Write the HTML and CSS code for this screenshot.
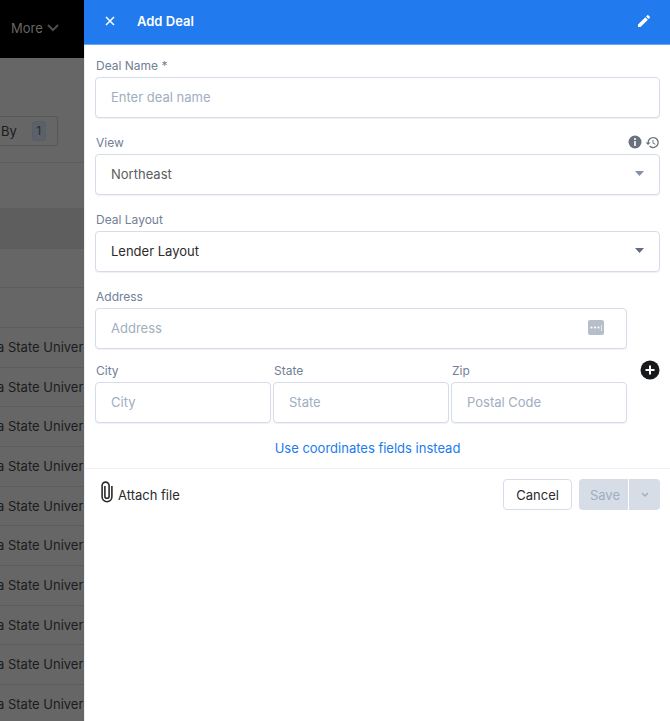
FILE: index.html
```html
<!DOCTYPE html>
<html lang="en">
<head>
<meta charset="utf-8">
<meta name="viewport" content="width=device-width, initial-scale=1">
<title>Add Deal</title>
<link rel="stylesheet" href="styles.css">
</head>
<body>
<div class="backdrop" aria-hidden="true">
  <div class="topbar">
    <span>More</span>
    <svg width="12" height="8" viewBox="0 0 12 8"><path d="M1 1l5 5 5-5" fill="none" stroke="currentColor" stroke-width="2"/></svg>
  </div>
  <div class="toolbar">
    <div class="filter"><span>By</span><span class="count">1</span></div>
  </div>
  <table class="rows">
    <thead><tr><th></th></tr></thead>
    <tbody>
      <tr><td></td></tr>
      <tr><td></td></tr>
      <tr><td>a State Univer</td></tr>
      <tr><td>a State Univer</td></tr>
      <tr><td>a State Univer</td></tr>
      <tr><td>a State Univer</td></tr>
      <tr><td>a State Univer</td></tr>
      <tr><td>a State Univer</td></tr>
      <tr><td>a State Univer</td></tr>
      <tr><td>a State Univer</td></tr>
      <tr><td>a State Univer</td></tr>
      <tr><td>a State Univer</td></tr>
    </tbody>
  </table>
</div>

<main class="drawer">
  <header class="drawer-header">
    <button class="icon-button" type="button" aria-label="Close">
      <svg width="10" height="10" viewBox="0 0 10 10"><path d="M1 1l8 8M9 1l-8 8" stroke="currentColor" stroke-width="1.5" fill="none"/></svg>
    </button>
    <h1>Add Deal</h1>
    <button class="icon-button" type="button" aria-label="Edit layout">
      <svg width="16" height="16" viewBox="0 0 24 24"><path fill="currentColor" d="M3 17.25V21h3.75L17.81 9.94l-3.75-3.75L3 17.25zM20.71 7.04a1 1 0 0 0 0-1.41l-2.34-2.34a1 1 0 0 0-1.41 0l-1.83 1.83 3.75 3.75 1.83-1.83z"/></svg>
    </button>
  </header>

  <form>
    <div class="fields">
      <div class="field">
        <label for="name">Deal Name *</label>
        <input id="name" type="text" placeholder="Enter deal name">
      </div>
      <div class="field">
        <div class="label-row">
          <label for="view">View</label>
          <span class="hints">
            <svg width="14" height="14" viewBox="0 0 14 14"><circle cx="7" cy="7" r="6.5" fill="currentColor"/><path d="M7 3v2M7 6v5" stroke="#fff" stroke-width="1.6"/></svg>
            <svg width="15" height="15" viewBox="0 0 24 24"><path fill="currentColor" d="M13 3a9 9 0 0 0-9 9H1l3.89 3.89.07.14L9 12H6a7 7 0 1 1 7 7 6.9 6.9 0 0 1-4.94-2.06l-1.42 1.42A9 9 0 1 0 13 3zm-1 5v5l4.28 2.54.72-1.21-3.5-2.08V8H12z"/></svg>
          </span>
        </div>
        <div class="select muted">
          <select id="view" disabled><option>Northeast</option></select>
          <svg width="9" height="5" viewBox="0 0 9 5"><path d="M0 0h9L4.5 5z" fill="currentColor"/></svg>
        </div>
      </div>
      <div class="field">
        <label for="layout">Deal Layout</label>
        <div class="select">
          <select id="layout"><option>Lender Layout</option></select>
          <svg width="9" height="5" viewBox="0 0 9 5"><path d="M0 0h9L4.5 5z" fill="currentColor"/></svg>
        </div>
      </div>
      <div class="location">
        <div class="location-fields">
          <div class="field">
            <label for="address">Address</label>
            <div class="with-badge">
              <input id="address" type="text" placeholder="Address">
              <svg width="16" height="15" viewBox="0 0 16 15"><rect width="16" height="15" rx="2" fill="#b6beca"/><circle cx="3.5" cy="7.5" r="1.1" fill="#fff"/><circle cx="7" cy="7.5" r="1.1" fill="#fff"/><circle cx="10.5" cy="7.5" r="1.1" fill="#fff"/><path d="M13.5 5v6" stroke="#e4e8ed"/></svg>
            </div>
          </div>
          <div class="place">
            <div class="field">
              <label for="city">City</label>
              <input id="city" type="text" placeholder="City">
            </div>
            <div class="field">
              <label for="state">State</label>
              <input id="state" type="text" placeholder="State">
            </div>
            <div class="field">
              <label for="zip">Zip</label>
              <input id="zip" type="text" placeholder="Postal Code">
            </div>
          </div>
        </div>
        <button class="add" type="button" aria-label="Add address">
          <svg width="20" height="20" viewBox="0 0 20 20"><circle cx="10" cy="10" r="9.5" fill="#18191b"/><path d="M10 5.5v9M5.5 10h9" stroke="#fff" stroke-width="2"/></svg>
        </button>
      </div>
      <a class="coordinates" href="#">Use coordinates fields instead</a>
    </div>

    <footer class="actions">
      <button class="attach" type="button">
        <svg width="12" height="22" viewBox="0 0 12 22"><path d="M10.9 5v10.8a4.9 4.9 0 0 1-9.8 0V4.6a3.5 3.5 0 0 1 7 0v10.6a2.1 2.1 0 0 1-4.2 0V5" fill="none" stroke="currentColor" stroke-width="1.6"/></svg>
        <span>Attach file</span>
      </button>
      <button class="cancel" type="button">Cancel</button>
      <div class="split">
        <button class="save" type="submit" disabled>Save</button>
        <button class="more" type="button" disabled aria-label="More save options">
          <svg width="8" height="6" viewBox="0 0 8 6"><path d="M1 1l3 3 3-3" fill="none" stroke="currentColor" stroke-width="1.4"/></svg>
        </button>
      </div>
    </footer>
  </form>
</main>
</body>
</html>
```
FILE: styles.css
```css
* {
  box-sizing: border-box;
}

body {
  margin: 0;
  background: #666;
  color: #2b2b2b;
  font: 13px/18px Inter, "Open Sans", sans-serif;
}

button,
input,
select {
  margin: 0;
  font: inherit;
  color: inherit;
}

button {
  padding: 0;
  border: 0;
  background: none;
}

svg {
  display: block;
  flex: none;
}

/* Dimmed page behind the drawer */
.backdrop {
  position: fixed;
  inset: 0;
  overflow: hidden;
  background: #666;
  color: #1c1c1e;
}

.topbar {
  display: flex;
  align-items: center;
  gap: 4px;
  height: 58px;
  padding: 0 0 2px 11px;
  background: #000;
  color: #666;
}

.topbar svg {
  color: #4a4d52;
}

.toolbar {
  display: flex;
  align-items: flex-start;
  height: 105px;
  padding-top: 58px;
  border-bottom: 1px solid #5b5f64;
}

.filter {
  display: flex;
  align-items: center;
  gap: 15px;
  height: 30px;
  padding: 0 11px 0 1px;
  border: 1px solid #54575b;
  border-left: 0;
  border-radius: 0 3px 3px 0;
}

.count {
  width: 14px;
  border: 1px solid #53606b;
  border-radius: 3px;
  background: #5b6166;
  color: #1c2c3c;
  font-size: 12px;
  text-align: center;
}

.rows {
  width: 100%;
  margin-top: 45px;
  border-collapse: collapse;
}

.rows th {
  background: #5e5e5e;
}

.rows th,
.rows td {
  height: 40px;
  padding: 0;
  border-bottom: 1px solid #5c5c5c;
  text-indent: -3px;
  white-space: nowrap;
}

.rows tr:nth-child(3n + 1) td {
  height: 39px;
}

/* Drawer */
.drawer {
  position: relative;
  min-height: 100vh;
  margin-left: 84px;
  border-left: 1px solid #eee;
  background: #fff;
}

.drawer-header {
  display: flex;
  align-items: center;
  height: 45px;
  margin-left: -1px;
  padding: 0 18px 3px;
  border-bottom: 1px solid #6ba7f3;
  background: #217bee;
  color: #fff;
}

.drawer-header h1 {
  flex: 1;
  margin: 0 0 0 19px;
  font-size: 13px;
  font-weight: 600;
}

.icon-button {
  display: grid;
  place-items: center;
  width: 16px;
  height: 16px;
}

.fields {
  display: flex;
  flex-direction: column;
  gap: 16px;
  padding: 12px 10px 11px;
}

.field label {
  display: block;
  height: 20px;
  padding: 0 1px;
  color: #718096;
  font-size: 12px;
}

.label-row {
  display: flex;
  justify-content: space-between;
}

.hints {
  display: flex;
  align-items: center;
  gap: 3px;
  height: 16px;
  color: #697180;
}

input,
select {
  display: block;
  width: 100%;
  height: 41px;
  padding: 0 15px 2px;
  border: 1px solid #d6dce8;
  border-radius: 4px;
  outline: 0;
  background: #fff;
  box-shadow: 0 1px 1px #eef1f5;
  appearance: none;
}

input::placeholder {
  color: #a0aec0;
  opacity: 1;
}

select:disabled {
  color: #5c5c5c;
  opacity: 1;
}

.select,
.with-badge {
  position: relative;
}

.select svg {
  position: absolute;
  top: 17px;
  right: 16px;
  color: #5f6d85;
  pointer-events: none;
}

.muted svg {
  color: #8490a5;
}

.with-badge svg {
  position: absolute;
  top: 12px;
  right: 23px;
}

.location {
  display: grid;
  grid-template-columns: 1fr 20px;
  gap: 13px;
}

.location-fields {
  display: grid;
  gap: 13px;
}

.place {
  display: grid;
  grid-template-columns: repeat(3, minmax(0, 1fr));
  gap: 2px;
}

.add {
  align-self: end;
  margin-bottom: 43px;
}

.coordinates {
  align-self: center;
  margin-right: 20px;
  color: #217bee;
  text-decoration: none;
}

.actions {
  display: flex;
  align-items: center;
  padding: 10px 10px 10px 16px;
  border-top: 1px solid #eff0f2;
}

.attach {
  display: flex;
  align-items: center;
  gap: 5px;
  margin-right: auto;
}

.attach svg {
  margin-bottom: 6px;
}

.cancel {
  height: 31px;
  margin-right: 7px;
  padding: 0 12px;
  border: 1px solid #d6dce8;
  border-radius: 4px;
}

.split {
  display: flex;
  gap: 1px;
  height: 31px;
  color: #a0aec0;
}

.save,
.more {
  background: #d6dde6;
}

.save {
  padding: 0 8px 0 11px;
  border-radius: 4px 0 0 4px;
}

.more {
  display: grid;
  place-items: center;
  width: 31px;
  border-radius: 0 4px 4px 0;
}
```
